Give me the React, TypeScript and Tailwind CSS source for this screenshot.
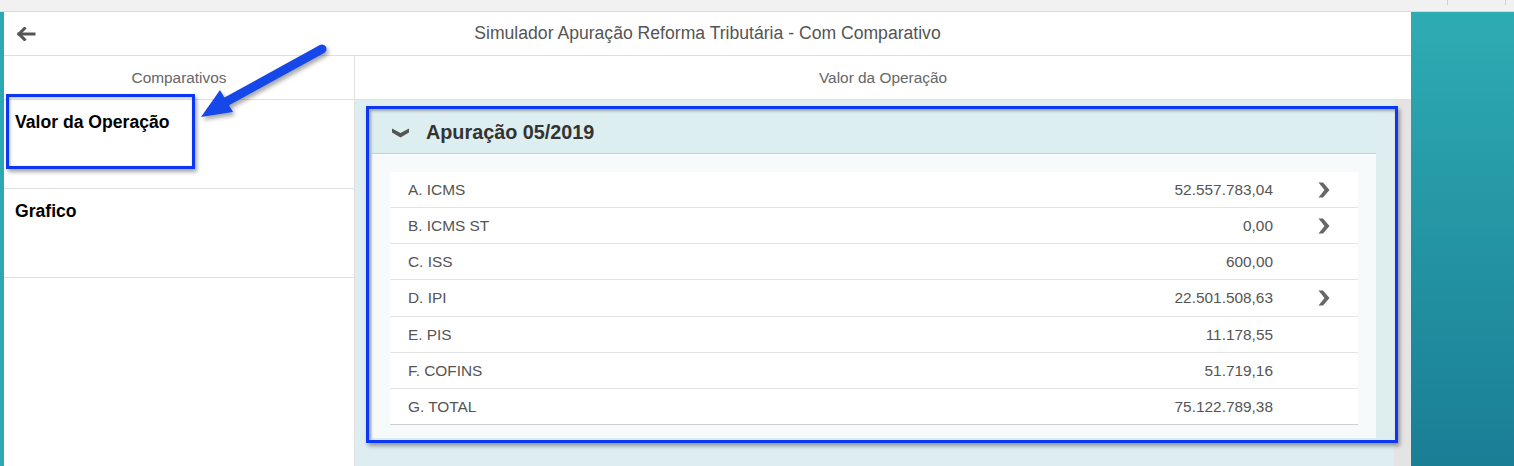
import React from "react";

const rows = [
  { label: "A. ICMS", value: "52.557.783,04", arrow: true },
  { label: "B. ICMS ST", value: "0,00", arrow: true },
  { label: "C. ISS", value: "600,00", arrow: false },
  { label: "D. IPI", value: "22.501.508,63", arrow: true },
  { label: "E. PIS", value: "11.178,55", arrow: false },
  { label: "F. COFINS", value: "51.719,16", arrow: false },
  { label: "G. TOTAL", value: "75.122.789,38", arrow: false },
];

function ChevronRight() {
  return (
    <svg width="12" height="16" viewBox="0 0 12 16">
      <path d="M0.5 0.5 H5 L11.5 8 L5 15.5 H0.5 L6.5 8 Z" fill="#666" />
    </svg>
  );
}

function ChevronDown() {
  return (
    <svg width="17" height="10" viewBox="0 0 17 10">
      <path d="M0 0.5 L8.5 5 L17 0.5 V4.5 L8.5 9.5 L0 4.5 Z" fill="#555" />
    </svg>
  );
}

export default function App() {
  return (
    <div className="relative w-[1514px] h-[466px] overflow-hidden flex flex-col bg-[#f1f1f1] font-['Liberation_Sans',Arial,sans-serif]">
      {/* browser top strip */}
      <div className="h-[12px] shrink-0 border-b border-[#dadada] bg-[#f1f1f1] flex justify-end">
        <div className="w-[1px] h-[5px] bg-[#d0d0d0] mr-[57px]" />
        <div className="w-[1px] h-[5px] bg-[#d0d0d0] mr-[8px]" />
      </div>
      <div className="flex flex-1 min-h-0">
        <div className="w-[4px] bg-[#2aa9b2]" />
        <div className="w-[1407px] bg-white flex flex-col">
          {/* header */}
          <div className="h-[44px] shrink-0 border-b border-[#dedede] flex items-center relative">
            <div className="pl-[12px] flex items-center">
              <svg width="20" height="14" viewBox="0 0 20 14">
                <path d="M18 7 H3" stroke="#555" strokeWidth="3" strokeLinecap="square" fill="none" />
                <path d="M8.5 1.5 L3 7 L8.5 12.5" stroke="#555" strokeWidth="3" strokeLinecap="square" fill="none" />
              </svg>
            </div>
            <div className="absolute inset-0 flex items-center justify-center text-[17.6px] text-[#555] pointer-events-none">
              Simulador Apuração Reforma Tributária - Com Comparativo
            </div>
          </div>
          {/* columns */}
          <div className="flex flex-1 min-h-0">
            <div className="w-[351px] shrink-0 border-r border-[#e0e0e0] flex flex-col">
              <div className="h-[44px] shrink-0 border-b border-[#e0e0e0] flex items-center justify-center text-[15.4px] text-[#666]">
                Comparativos
              </div>
              <div className="h-[89px] border-b border-[#e0e0e0] pl-[11px] pt-[9px] text-[17.6px] font-bold text-black">
                Valor da Operação
              </div>
              <div className="h-[89px] border-b border-[#e0e0e0] pl-[11px] pt-[9px] text-[17.6px] font-bold text-black">
                Grafico
              </div>
            </div>
            <div className="flex-1 flex flex-col">
              <div className="h-[44px] shrink-0 border-b border-[#e0e0e0] flex items-center justify-center text-[15.4px] text-[#666]">
                Valor da Operação
              </div>
              <div className="flex flex-1 min-h-0">
                <div className="flex-1 bg-[#ddedf0] pl-[17px] pr-[18px] pt-[12px]">
                  <div className="flex flex-col">
                    <div className="h-[42px] border-b border-[#c9d2d4] bg-[#ddeef1] flex items-center pl-[20px]">
                      <ChevronDown />
                      <span className="ml-[17px] text-[19.8px] font-bold text-[#333]">Apuração 05/2019</span>
                    </div>
                    <div className="bg-[#f7fafb] px-[18px] pt-[18px] pb-[13px]">
                      <div className="bg-white flex flex-col">
                        {rows.map((r, i) => (
                          <div
                            key={r.label}
                            className={
                              i === rows.length - 1
                                ? "h-[36.17px] border-b border-[#cfcfcf] flex items-center text-[15.4px] text-[#555]"
                                : "h-[36.17px] border-b border-[#e3e3e3] flex items-center text-[15.4px] text-[#555]"
                            }
                          >
                            <span className="pl-[18px] flex-1">{r.label}</span>
                            <span>{r.value}</span>
                            <span className="w-[85px] pl-[45px] flex items-center">
                              {r.arrow ? <ChevronRight /> : null}
                            </span>
                          </div>
                        ))}
                      </div>
                    </div>
                  </div>
                </div>
                <div className="w-[17px] bg-[#e4e4e4]" />
              </div>
            </div>
          </div>
        </div>
        <div className="flex-1 bg-gradient-to-b from-[#2eacb3] to-[#1a7e95]" />
      </div>

      {/* annotations */}
      <div className="absolute left-[6px] top-[94px] w-[189px] h-[75px] border-[3px] border-[#0c37f2] shadow-[2px_3px_4px_rgba(0,0,0,0.35),inset_1px_1px_3px_rgba(0,0,0,0.3)]" />
      <div className="absolute left-[366px] top-[106px] w-[1032px] h-[337px] border-[3px] border-[#0c37f2] shadow-[2px_3px_4px_rgba(0,0,0,0.35),inset_2px_2px_3px_rgba(0,0,0,0.3)]" />
      <svg className="absolute left-0 top-0" width="400" height="140" viewBox="0 0 400 140">
        <defs>
          <filter id="sh" x="-20%" y="-20%" width="140%" height="140%">
            <feDropShadow dx="2" dy="3" stdDeviation="2" floodColor="#000" floodOpacity="0.35" />
          </filter>
        </defs>
        <g filter="url(#sh)">
          <line x1="322" y1="49" x2="222" y2="104" stroke="#1746e8" strokeWidth="9" strokeLinecap="round" />
          <polygon points="201,117 220,90 233,112" fill="#1746e8" />
        </g>
      </svg>
    </div>
  );
}
